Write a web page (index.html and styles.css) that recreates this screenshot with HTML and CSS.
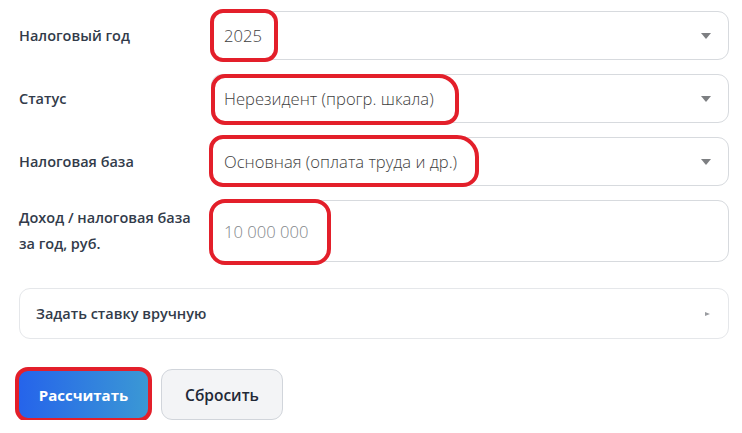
FILE: index.html
```html
<!DOCTYPE html>
<html lang="ru">
<head>
<meta charset="utf-8">
<title>Калькулятор НДФЛ</title>
<link rel="stylesheet" href="styles.css">
</head>
<body>

<div class="calc">

  <div class="row">
    <label class="label">Налоговый год</label>
    <div class="field select">
      <span class="value">2025</span>
      <span class="caret"></span>
      <span class="mark mark-year"></span>
    </div>
  </div>

  <div class="row">
    <label class="label">Статус</label>
    <div class="field select">
      <span class="value">Нерезидент (прогр. шкала)</span>
      <span class="caret"></span>
      <span class="mark mark-status"></span>
    </div>
  </div>

  <div class="row">
    <label class="label">Налоговая база</label>
    <div class="field select">
      <span class="value">Основная (оплата труда и др.)</span>
      <span class="caret"></span>
      <span class="mark mark-base"></span>
    </div>
  </div>

  <div class="row">
    <label class="label">Доход / налоговая база за год, руб.</label>
    <div class="field input">
      <span class="placeholder">10 000 000</span>
      <span class="mark mark-income"></span>
    </div>
  </div>

  <div class="details">
    <span>Задать ставку вручную</span>
    <span class="marker"></span>
  </div>

  <div class="buttons">
    <div class="btn-wrap">
      <a class="button primary">Рассчитать</a>
      <span class="mark mark-btn"></span>
    </div>
    <a class="button secondary">Сбросить</a>
  </div>

</div>

</body>
</html>
```

FILE: styles.css
```css
body {
  margin: 0;
  background: #fff;
  font-family: "Open Sans", "Noto Sans", sans-serif;
}

.calc {
  width: 710px;
  padding: 11px 0 0 19px;
}

.row {
  display: flex;
  align-items: center;
  margin-bottom: 14px;
}

.label {
  width: 192px;
  font-size: 14.5px;
  font-weight: 600;
  color: #323b4a;
  line-height: 26px;
  padding-right: 20px;
  box-sizing: border-box;
}

.field {
  position: relative;
  flex: 1;
  box-sizing: border-box;
  border: 1px solid #d7dade;
  border-radius: 11px;
  display: flex;
  align-items: center;
  padding: 0 12px;
}

.select {
  height: 49px;
}

.input {
  height: 62px;
}

.value {
  font-size: 16.6px;
  font-weight: 300;
  color: #3e3e3e;
}

.placeholder {
  font-size: 16.6px;
  font-weight: 300;
  color: #82868a;
}

.caret {
  margin-left: auto;
  margin-right: 5px;
  width: 0;
  height: 0;
  border-left: 5px solid transparent;
  border-right: 5px solid transparent;
  border-top: 6px solid #7d7f82;
}

.details {
  margin-top: 26px;
  height: 51px;
  box-sizing: border-box;
  border: 1px solid #e5e7ea;
  border-radius: 11px;
  display: flex;
  align-items: center;
  padding: 0 16px;
  font-size: 14.5px;
  font-weight: 600;
  color: #323b4a;
}

.marker {
  margin-left: auto;
  margin-right: 2px;
  width: 0;
  height: 0;
  border-top: 2.5px solid transparent;
  border-bottom: 2.5px solid transparent;
  border-left: 5px solid #9a9ca0;
}

.buttons {
  display: flex;
  gap: 11px;
  margin-top: 30px;
  margin-left: -2px;
}

.btn-wrap {
  position: relative;
}

.button {
  display: flex;
  align-items: center;
  justify-content: center;
  height: 51px;
  box-sizing: border-box;
  border-radius: 11px;
  font-size: 15px;
  font-weight: 700;
  text-decoration: none;
}

.primary {
  width: 133px;
  color: #fff;
  background: linear-gradient(to right, #2563eb, #3b99d4);
}

.secondary {
  width: 122px;
  color: #1f2937;
  font-size: 15.5px;
  font-weight: 600;
  background: #f3f4f6;
  border: 1px solid #d1d5db;
}

/* red marker annotations drawn over the screenshot */
.mark {
  position: absolute;
  border: 4px solid #e31f2a;
  border-radius: 13px;
  box-sizing: border-box;
  pointer-events: none;
}

.mark-year {
  left: -2px;
  top: -3px;
  width: 68px;
  height: 53px;
}

.mark-status {
  left: -1px;
  top: -1px;
  width: 248px;
  height: 51px;
  border-radius: 14px 20px 14px 14px;
}

.mark-base {
  left: -3px;
  top: -3px;
  width: 270px;
  height: 52px;
  border-radius: 14px 22px 16px 14px;
}

.mark-income {
  left: -3px;
  top: -2px;
  width: 122px;
  height: 66px;
  border-radius: 16px;
}

.mark-btn {
  left: -2px;
  top: -2px;
  width: 137px;
  height: 55px;
  border-radius: 13px;
}
```
